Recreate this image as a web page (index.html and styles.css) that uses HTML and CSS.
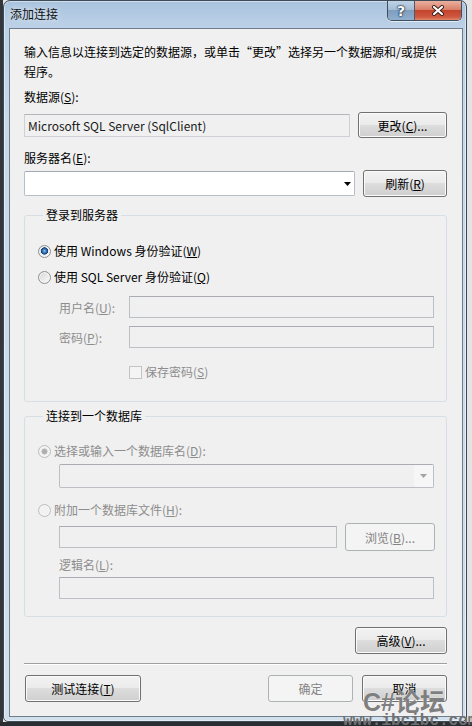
FILE: index.html
```html
<!DOCTYPE html>
<html lang="zh-CN">
<head>
    <meta charset="UTF-8">
    <meta name="viewport" content="width=device-width, initial-scale=1.0">
    <title>添加连接</title>
    <link rel="stylesheet" href="styles.css">
</head>
<body>

    <div class="window">
        <div class="titlebar">
            <span class="title">添加连接</span>
            <div class="caption-buttons">
                <span class="cap-btn help">?</span>
                <span class="cap-btn close">
                    <svg width="14" height="11" viewBox="0 0 14 11">
                        <path d="M3 2 L11 9 M11 2 L3 9" stroke="#3a1e18" stroke-width="4" stroke-linecap="round"/>
                        <path d="M3 2 L11 9 M11 2 L3 9" stroke="#ffffff" stroke-width="2.2" stroke-linecap="round"/>
                    </svg>
                </span>
            </div>
        </div>

        <div class="client">
            <p class="intro">输入信息以连接到选定的数据源，或单击“更改”选择另一个数据源和/或提供程序。</p>

            <label class="field-label label-source">数据源(<u>S</u>):</label>
            <div class="row row-source">
                <div class="textbox source">Microsoft SQL Server (SqlClient)</div>
                <button class="btn btn-change">更改(<u>C</u>)...</button>
            </div>

            <label class="field-label label-server">服务器名(<u>E</u>):</label>
            <div class="row row-server">
                <div class="combo server">
                    <svg width="7" height="4" viewBox="0 0 7 4"><path d="M0 0 H7 L3.5 4 Z" fill="#000"/></svg>
                </div>
                <button class="btn btn-refresh">刷新(<u>R</u>)</button>
            </div>

            <!-- Login group -->
            <fieldset class="group group-login">
                <legend>登录到服务器</legend>
                <label class="radio radio-win"><span class="radio-dot checked"></span><span>使用 Windows 身份验证(<u>W</u>)</span></label>
                <label class="radio radio-sql"><span class="radio-dot"></span><span>使用 SQL Server 身份验证(<u>Q</u>)</span></label>
                <div class="cred-row cred-user">
                    <span class="cred-label">用户名(<u>U</u>):</span>
                    <span class="textbox cred-box"></span>
                </div>
                <div class="cred-row cred-pass">
                    <span class="cred-label">密码(<u>P</u>):</span>
                    <span class="textbox cred-box"></span>
                </div>
                <label class="check"><span class="check-box"></span><span>保存密码(<u>S</u>)</span></label>
            </fieldset>

            <!-- Database group -->
            <fieldset class="group group-db">
                <legend>连接到一个数据库</legend>
                <label class="radio disabled radio-dbname"><span class="radio-dot checked"></span><span>选择或输入一个数据库名(<u>D</u>):</span></label>
                <div class="combo disabled db-combo">
                    <span class="combo-drop">
                        <svg width="7" height="4" viewBox="0 0 7 4"><path d="M0 0 H7 L3.5 4 Z" fill="#a3a3a3"/></svg>
                    </span>
                </div>
                <label class="radio disabled radio-attach"><span class="radio-dot"></span><span>附加一个数据库文件(<u>H</u>):</span></label>
                <div class="row row-file">
                    <span class="textbox file-box"></span>
                    <button class="btn btn-browse" disabled>浏览(<u>B</u>)...</button>
                </div>
                <span class="field-label disabled-text label-logical">逻辑名(<u>L</u>):</span>
                <span class="textbox logical-box"></span>
            </fieldset>

            <div class="advanced-row">
                <button class="btn btn-advanced">高级(<u>V</u>)...</button>
            </div>

            <div class="separator"></div>

            <div class="footer-buttons">
                <button class="btn btn-test">测试连接(<u>T</u>)</button>
                <div class="footer-right">
                    <button class="btn btn-ok" disabled>确定</button>
                    <button class="btn btn-cancel">取消</button>
                </div>
            </div>
        </div>
    </div>

    <div class="watermark">C#论坛</div>
    <div class="watermark-url">www.ibcibc.com</div>

</body>
</html>
```

FILE: styles.css
```css
* {
    margin: 0;
    padding: 0;
    box-sizing: border-box;
}

body {
    width: 472px;
    height: 726px;
    overflow: hidden;
    padding-left: 3px;
    font-family: "Noto Sans CJK SC", sans-serif;
    font-size: 12px;
    color: #000;
    background:
        linear-gradient(#2a2e33, #2a2e33) left bottom / 100% 4px no-repeat,
        linear-gradient(to right, #33373b 0, #33373b 3px, #e4e4e4 3px);
}

u {
    text-decoration: underline;
    text-underline-offset: 1px;
}

/* Window frame */
.window {
    width: 464px;
    height: 722px;
    border: 1px solid #3d4a58;
    border-radius: 7px 7px 5px 5px;
    background: linear-gradient(to bottom, #a8c2de 0, #bcd1e7 26px, #c8d9eb 120px, #d2dfec 100%);
    box-shadow: inset 0 0 0 1px rgba(255, 255, 255, 0.45);
    padding: 0 3px 4px 5px;
    display: flex;
    flex-direction: column;
}

.titlebar {
    height: 27px;
    display: flex;
    justify-content: space-between;
    align-items: flex-start;
}

.title {
    margin: 5px 0 0 1px;
    line-height: 16px;
    color: #111;
    text-shadow: 0 0 6px rgba(255, 255, 255, 0.9);
}

.caption-buttons {
    display: flex;
    height: 20px;
    margin-right: 1px;
    border: 1px solid #3f4d5c;
    border-top: none;
    border-radius: 0 0 5px 5px;
    overflow: hidden;
    box-shadow: 0 1px 0 rgba(255, 255, 255, 0.6);
}

.cap-btn {
    display: flex;
    align-items: center;
    justify-content: center;
    height: 100%;
}

.help {
    width: 27px;
    border-right: 1px solid #4b5b6b;
    background: linear-gradient(#c0d3e6 0, #a4bdd6 45%, #7f9dbd 50%, #90b0cf 100%);
    color: #fff;
    font: bold 14px "DejaVu Sans", sans-serif;
    text-shadow: 0 0 1px #1c2c40, 0 0 2px #1c2c40, 0 0 2px #1c2c40;
}

.close {
    width: 46px;
    background: linear-gradient(#eab0a0 0, #d8806a 45%, #c4432c 50%, #cf5a43 85%, #e4896b 100%);
}

/* Client area */
.client {
    flex: 1;
    background: #f0f0f0;
    border: 1px solid #6e7d8c;
    padding: 13px 15px 0 14px;
}

.intro {
    line-height: 20px;
}

.field-label {
    display: block;
    line-height: 16px;
}

.label-source {
    margin-top: 7px;
}

.label-server {
    margin-top: 12px;
}

.row {
    display: flex;
    align-items: center;
    justify-content: space-between;
}

.row-source {
    margin-top: 7px;
}

.row-server {
    margin-top: 4px;
}

.textbox {
    display: block;
    height: 22px;
    border: 1px solid #bcbfc3;
    border-top-color: #a9acb0;
    background: #f0f0f0;
}

.textbox.source {
    width: 326px;
    height: 23px;
    padding-left: 3px;
    line-height: 21px;
    color: #1a1a1a;
    border-color: #cdd0d4;
    border-top-color: #b2b5b9;
}

.combo {
    display: flex;
    align-items: center;
    justify-content: flex-end;
    height: 25px;
    background: #fff;
    border: 1px solid #b6bec8;
    border-top-color: #a0a9b4;
    border-radius: 2px;
}

.combo.server {
    width: 331px;
    padding-right: 3px;
}

/* Buttons */
.btn {
    font: inherit;
    height: 27px;
    line-height: 25px;
    color: #000;
    border: 1px solid #707070;
    border-radius: 3px;
    background: linear-gradient(#f2f2f2 0, #ebebeb 50%, #dddddd 50%, #cfcfcf 100%);
    box-shadow: inset 0 0 0 1px #fbfbfb;
}

.btn:disabled {
    color: #838383;
    border-color: #adb2b5;
    background: #f4f4f4;
    box-shadow: none;
}

.btn-change {
    width: 89px;
    height: 26px;
}

.btn-refresh {
    width: 84px;
}

/* Group boxes */
.group {
    border: 1px solid #d5dfe5;
    border-radius: 3px;
    min-inline-size: 0;
}

.group legend {
    margin-left: 5px;
    padding: 0 3px;
    line-height: 16px;
}

.group-login {
    margin-top: 10px;
    padding: 20px 12px 21px 13px;
}

.group-db {
    margin-top: 6px;
    padding: 19px 12px 17px 13px;
}

.radio,
.check {
    display: flex;
    align-items: center;
    gap: 3px;
    line-height: 16px;
}

.radio-sql {
    margin-top: 10px;
}

.radio-dot {
    width: 13px;
    height: 13px;
    border-radius: 50%;
    border: 1px solid #8e8f8f;
    background: linear-gradient(135deg, #d6d6d6, #fbfbfb);
    box-shadow: inset 0 0 0 1px #f4f4f4;
}

.radio-dot.checked {
    background:
        radial-gradient(circle at 50% 45%, #9fcaf0 0, #3e7fc2 1.6px, #123f75 3.4px, transparent 3.9px),
        linear-gradient(135deg, #d6d6d6, #fbfbfb);
}

.radio.disabled {
    color: #8d8d8d;
}

.radio.disabled .radio-dot {
    border-color: #bcbcbc;
    background: #f2f2f2;
}

.radio.disabled .radio-dot.checked {
    background:
        radial-gradient(circle, #a8a8a8 0, #b6b6b6 2.6px, transparent 3.4px),
        #f2f2f2;
}

.cred-row {
    display: flex;
    align-items: center;
    padding-left: 21px;
    color: #8d8d8d;
}

.cred-user {
    margin-top: 11px;
}

.cred-pass {
    margin-top: 8px;
}

.cred-label {
    width: 70px;
}

.cred-box {
    flex: 1;
}

.check {
    margin: 16px 0 0 91px;
    color: #8d8d8d;
}

.check-box {
    width: 13px;
    height: 13px;
    border: 1px solid #c4c4c4;
    background: #f4f4f4;
}

.db-combo {
    margin: 5px 0 0 21px;
    height: 24px;
    background: #f0f0f0;
    border-color: #bcbfc3;
    border-top-color: #a9acb0;
}

.combo-drop {
    display: flex;
    align-items: center;
    justify-content: center;
    width: 19px;
    height: 100%;
    background: #f6f6f6;
}

.radio-attach {
    margin-top: 14px;
}

.row-file {
    margin: 5px 0 0 21px;
}

.file-box {
    width: 278px;
}

.btn-browse {
    width: 90px;
    height: 28px;
    margin-right: -1px;
}

.disabled-text {
    color: #8d8d8d;
}

.label-logical {
    margin: 6px 0 0 21px;
}

.logical-box {
    margin: 4px 0 0 21px;
}

/* Bottom area */
.advanced-row {
    display: flex;
    justify-content: flex-end;
    margin-top: 10px;
}

.btn-advanced {
    width: 92px;
}

.separator {
    margin-top: 9px;
    height: 2px;
    border-top: 1px solid #a0a0a0;
    border-bottom: 1px solid #ffffff;
}

.footer-buttons {
    display: flex;
    justify-content: space-between;
    margin-top: 10px;
}

.footer-right {
    display: flex;
    gap: 9px;
}

.btn-test {
    width: 116px;
    margin-left: 1px;
}

.btn-ok,
.btn-cancel {
    width: 85px;
}

/* Watermark laid over the dialog corner */
.watermark {
    position: absolute;
    left: 363px;
    top: 690px;
    font: bold 25px/25px "Liberation Sans", "Noto Sans CJK SC", sans-serif;
    color: #7f7f7f;
    text-shadow: 0 0 1px #fff;
}

.watermark-url {
    position: absolute;
    left: 343px;
    top: 713px;
    font: bold 16px/16px "Liberation Mono", monospace;
    color: #707070;
    white-space: nowrap;
}
```
